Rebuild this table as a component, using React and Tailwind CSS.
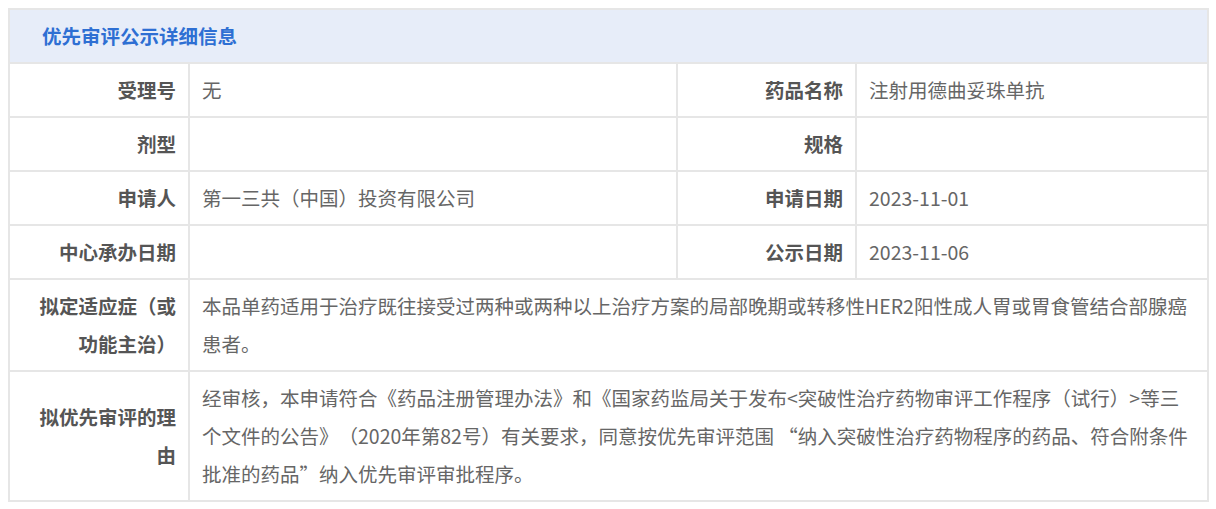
const rows = [
  { l1: '受理号', v1: '无', l2: '药品名称', v2: '注射用德曲妥珠单抗' },
  { l1: '剂型', v1: '', l2: '规格', v2: '' },
  { l1: '申请人', v1: '第一三共（中国）投资有限公司', l2: '申请日期', v2: '2023-11-01' },
  { l1: '中心承办日期', v1: '', l2: '公示日期', v2: '2023-11-06' },
];

const labelCls =
  'border-2 border-[#e6e6e6] pl-[20px] pr-[12px] py-[7px] text-right align-middle font-bold text-[#555555]';
const valueCls = 'border-2 border-[#e6e6e6] px-[12px] py-[7px] text-left align-middle text-[#666666]';

export default function App() {
  return (
    <div
      className="bg-white pl-[8px] pt-[8px] pb-[8px] text-[19.5px] leading-[38px] [text-spacing-trim:space-all]"
      style={{ fontFamily: '"Noto Sans CJK SC", "Noto Sans", sans-serif' }}
    >
      <table className="w-[1199px] table-fixed border-collapse border-2 border-[#e6e6e6]">
        <colgroup>
          <col className="w-[180px]" />
          <col className="w-[488px]" />
          <col className="w-[179px]" />
          <col className="w-[352px]" />
        </colgroup>
        <tbody>
          {/* 标题行 */}
          <tr>
            <td colSpan={4} className="border-2 border-[#e6e6e6] bg-[#e7edf9] pl-[32px] py-[7px] font-bold text-[#2e6fd3]">
              优先审评公示详细信息
            </td>
          </tr>

          {rows.map((r) => (
            <tr key={r.l1}>
              <td className={labelCls}>{r.l1}</td>
              <td className={valueCls}>{r.v1}</td>
              <td className={labelCls}>{r.l2}</td>
              <td className={valueCls}>{r.v2}</td>
            </tr>
          ))}

          <tr>
            <td className={labelCls}>拟定适应症（或功能主治）</td>
            <td colSpan={3} className={valueCls + ' whitespace-nowrap'}>
              本品单药适用于治疗既往接受过两种或两种以上治疗方案的局部晚期或转移性HER2阳性成人胃或胃食管结合部腺癌
              <br />
              患者。
            </td>
          </tr>

          <tr>
            <td className={labelCls}>拟优先审评的理由</td>
            <td colSpan={3} className={valueCls + ' whitespace-nowrap'}>
              经审核，本申请符合《药品注册管理办法》和《国家药监局关于发布&lt;突破性治疗药物审评工作程序（试行）&gt;等三
              <br />
              个文件的公告》（2020年第82号）有关要求，同意按优先审评范围 “纳入突破性治疗药物程序的药品、符合附条件
              <br />
              批准的药品”纳入优先审评审批程序。
            </td>
          </tr>
        </tbody>
      </table>
    </div>
  );
}
